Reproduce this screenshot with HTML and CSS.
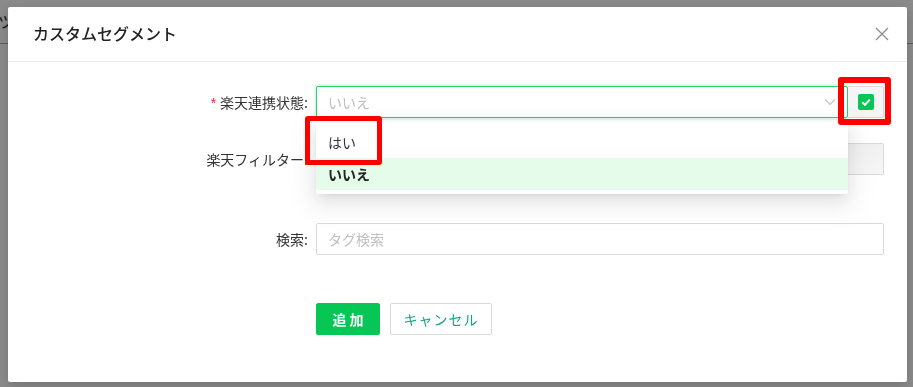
FILE: index.html
```html
<!doctype html>
<html lang="ja">
<head>
  <meta charset="UTF-8">
  <meta name="viewport" content="width=device-width, initial-scale=1.0">
  <title>カスタムセグメント</title>
  <link rel="stylesheet" href="styles.css">
</head>
<body>

  <div class="page">
    <div class="page-head"><span class="page-head-text">ツール</span></div>
  </div>
  <div class="mask"></div>

  <div class="modal">
    <div class="modal-header">
      <div class="modal-title">カスタムセグメント</div>
      <button class="modal-close" type="button" aria-label="閉じる">
        <svg width="14" height="14" viewBox="0 0 14 14"><path d="M1 1L13 13M13 1L1 13" stroke="#8c8c8c" stroke-width="1.3" fill="none"/></svg>
      </button>
    </div>

    <div class="modal-body">
      <form class="seg-form">
        <div class="form-row">
          <label class="form-label"><span class="req">*</span>楽天連携状態:</label>
          <div class="form-control">
            <div class="select focused">
              <span class="placeholder">いいえ</span>
              <svg class="arrow" width="12" height="12" viewBox="0 0 12 12"><path d="M1 3.5L6 8.5L11 3.5" stroke="#c4c4c4" stroke-width="1.2" fill="none"/></svg>
            </div>
            <button class="addon-btn" type="button">
              <span class="checkbox">
                <svg width="16" height="16" viewBox="0 0 16 16"><path d="M4.2 8.2L7 10.8L11.8 5.6" stroke="#fff" stroke-width="2" fill="none"/></svg>
              </span>
            </button>

            <ul class="dropdown">
              <li class="option">はい</li>
              <li class="option selected">いいえ</li>
            </ul>

            <div class="mark mark-option"></div>
            <div class="mark mark-check"></div>
          </div>
        </div>

        <div class="form-row row-filter">
          <label class="form-label">楽天フィルター:</label>
          <div class="form-control">
            <input class="input" type="text">
            <button class="addon-btn gray" type="button"></button>
          </div>
        </div>

        <div class="form-row row-search">
          <label class="form-label">検索:</label>
          <div class="form-control">
            <input class="input" type="text" placeholder="タグ検索">
          </div>
        </div>

        <div class="form-actions">
          <button class="btn btn-primary" type="button">追 加</button>
          <button class="btn btn-default" type="button">キャンセル</button>
        </div>
      </form>
    </div>
  </div>

</body>
</html>
```

FILE: styles.css
```css
body {
  margin: 0;
  font-family: "Noto Sans CJK JP", "Noto Sans", sans-serif;
  font-size: 14px;
  color: #333;
  background-color: #fff;
  overflow: hidden;
}

/* page behind the modal */
.page {
  height: 387px;
}

.page-head {
  height: 43px;
  border-bottom: 1px solid #aaa;
}

.page-head-text {
  display: block;
  width: 8px;
  overflow: hidden;
  white-space: nowrap;
  line-height: 42px;
  font-size: 16px;
  color: #222;
  text-indent: -2px;
}

.mask {
  position: fixed;
  inset: 0;
  background-color: rgba(0, 0, 0, 0.46);
}

/* Modal */
.modal {
  position: absolute;
  left: 8px;
  top: 7px;
  width: 899px;
  height: 375px;
  background-color: white;
  border-radius: 2px;
  box-shadow: 0 4px 12px rgba(0, 0, 0, 0.15);
}

.modal-header {
  display: flex;
  align-items: center;
  justify-content: space-between;
  height: 54px;
  padding: 0 18px 0 25px;
  border-bottom: 1px solid #ebebeb;
}

.modal-title {
  font-size: 16px;
  font-weight: 500;
  color: #222;
  line-height: 22px;
  margin-top: -2px;
}

.modal-close {
  display: flex;
  padding: 0;
  border: none;
  background: none;
  cursor: pointer;
}

.modal-body {
  padding: 24px 23px 24px 0;
}

/* Form */
.form-row {
  display: flex;
  margin-bottom: 24px;
}

.form-row.row-filter,
.form-row.row-search {
  margin-bottom: 48px;
}

.form-label {
  width: 300px;
  margin-right: 8px;
  text-align: right;
  line-height: 32px;
  color: #333;
  white-space: nowrap;
}

.req {
  color: #f5222d;
  margin-right: 4px;
  font-family: SimSun, "Liberation Sans", sans-serif;
}

.form-control {
  position: relative;
  flex: 1;
  display: flex;
}

.select,
.input {
  flex: 1;
  box-sizing: border-box;
  height: 32px;
  border: 1px solid #d9d9d9;
  border-radius: 2px;
  background-color: white;
  font-family: inherit;
  font-size: 14px;
  padding: 0 11px;
  outline: none;
}

.input::placeholder {
  color: #bfbfbf;
}

.select {
  display: flex;
  align-items: center;
  justify-content: space-between;
}

.select.focused {
  border-color: #2ccd6d;
  box-shadow: 0 0 0 2px rgba(6, 199, 85, 0.12);
}

.placeholder {
  color: #bfbfbf;
}

.addon-btn {
  width: 36px;
  height: 32px;
  display: flex;
  align-items: center;
  justify-content: center;
  box-sizing: border-box;
  border: 1px solid #d9d9d9;
  border-left: none;
  border-radius: 0 2px 2px 0;
  background-color: #f5f5f5;
  padding: 0;
}

.addon-btn.gray {
  background: linear-gradient(#f0f0f0, #f6f6f6);
}

.checkbox {
  display: flex;
  width: 16px;
  height: 16px;
  border-radius: 2px;
  background-color: #06c755;
}

/* Dropdown */
.dropdown {
  position: absolute;
  left: 0;
  top: 36px;
  width: 532px;
  margin: 0;
  padding: 4px 0;
  list-style: none;
  background-color: white;
  border-radius: 2px;
  box-shadow: 0 3px 6px -4px rgba(0, 0, 0, 0.12), 0 6px 16px 0 rgba(0, 0, 0, 0.08), 0 9px 28px 8px rgba(0, 0, 0, 0.05);
  z-index: 2;
}

.option {
  height: 32px;
  line-height: 32px;
  padding: 0 12px;
  color: #333;
}

.option.selected {
  background-color: #e6fcea;
  font-weight: 700;
  color: #222;
}

/* red highlight frames */
.mark {
  position: absolute;
  box-sizing: border-box;
  border: 5px solid #ff0000;
  border-radius: 3px;
  z-index: 3;
}

.mark-option {
  left: -11px;
  top: 30px;
  width: 77px;
  height: 49px;
}

.mark-check {
  left: 522px;
  top: -9px;
  width: 53px;
  height: 48px;
  border-width: 6px;
}

/* Buttons */
.form-actions {
  display: flex;
  gap: 10px;
  padding-left: 308px;
}

.btn {
  height: 32px;
  padding: 0;
  border-radius: 2px;
  font-family: inherit;
  font-size: 14px;
  white-space: nowrap;
  cursor: pointer;
}

.btn-primary {
  width: 64px;
  background-color: #06c755;
  border: 1px solid #06c755;
  color: white;
  font-weight: 700;
}

.btn-default {
  width: 102px;
  background-color: white;
  border: 1px solid #d9d9d9;
  color: #17a38b;
  letter-spacing: 1px;
}
```
